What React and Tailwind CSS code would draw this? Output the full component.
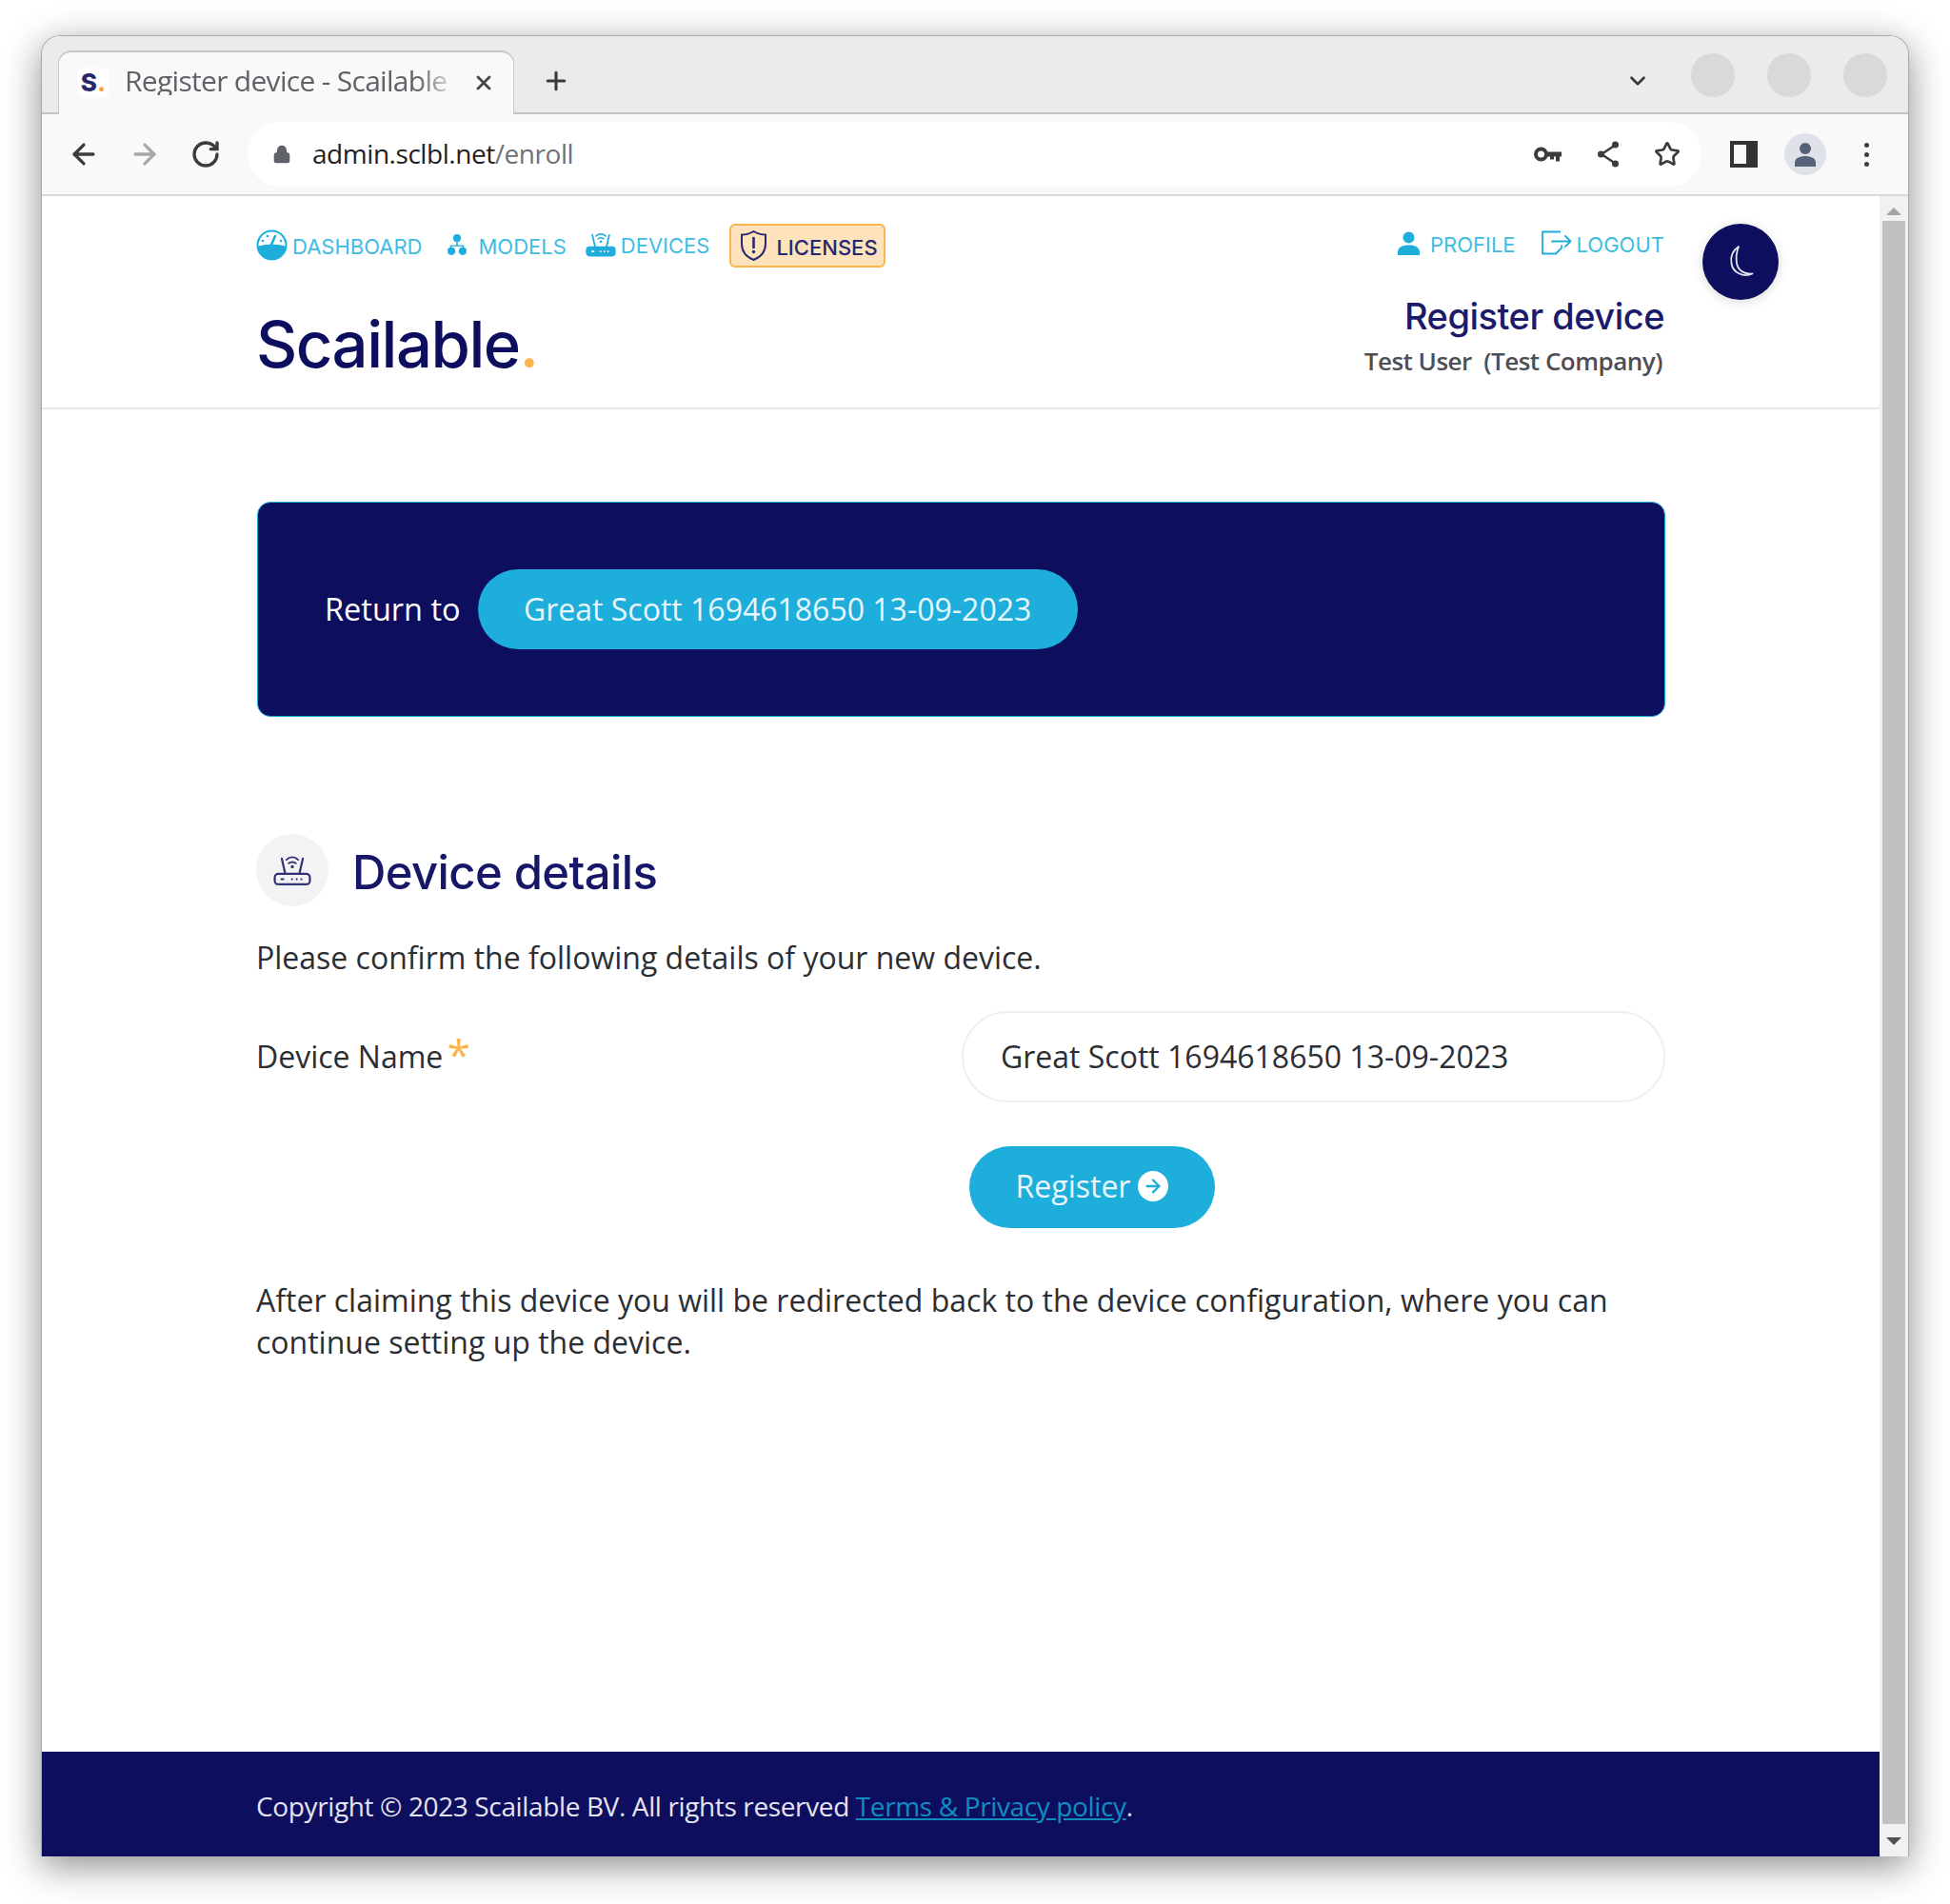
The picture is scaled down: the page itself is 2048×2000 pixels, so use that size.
import { ArrowLeft, ArrowRight, RotateCw, Lock, Plus, X, ChevronDown, Star } from 'lucide-react';

const Gauge = () => (
  <svg width="33" height="33" viewBox="0 0 33 33" fill="none">
    <circle cx="16.5" cy="16.5" r="15" stroke="#1eaedb" strokeWidth="2" />
    <path d="M2 18c5-3 24-3 29 0-1 8-7 14-14.500 14S3 26 2 18z" fill="#1eaedb" />
    <path d="M16 16l4-9" stroke="#1eaedb" strokeWidth="2.500" strokeLinecap="round" />
    <circle cx="7" cy="12" r="1.300" fill="#1eaedb" />
    <circle cx="12" cy="7" r="1.300" fill="#1eaedb" />
    <circle cx="26" cy="12" r="1.300" fill="#1eaedb" />
  </svg>
);

const Hierarchy = () => (
  <svg width="20" height="24" viewBox="0 0 22 25" fill="#1eaedb">
    <circle cx="11" cy="5" r="4.500" />
    <path d="M10.200 9h1.600v4H19v3h-1.600v-1.500H4.600V16H3v-3h7.200z" />
    <circle cx="4.500" cy="20" r="4.500" />
    <circle cx="17.500" cy="20" r="4.500" />
  </svg>
);

const Router = ({ color = '#1eaedb', filled = true, size = 32 }) => (
  <svg width={size} height={size * 0.86} viewBox="0 0 32 28" fill="none">
    <path d="M7 4l3 13M25 4l-3 13" stroke={color} strokeWidth="1.800" strokeLinecap="round" />
    <path d="M11 5c3-3 7-3 10 0M13 8c2-1.500 4-1.500 6 0" stroke={color} strokeWidth="1.600" strokeLinecap="round" />
    <circle cx="16" cy="11" r="1.400" fill={color} />
    <rect x="1" y="17" width="30" height="9" rx="3" fill={filled ? color : 'none'} stroke={color} strokeWidth="1.800" />
    <path d="M6 21.500h3M15 21.500h1.500M19 21.500h1.500M23 21.500h1.500" stroke={filled ? '#fff' : color} strokeWidth="1.600" />
  </svg>
);

const Shield = () => (
  <svg width="29" height="34" viewBox="0 0 29 34" fill="none">
    <path d="M14.500 2c4 2.500 8 3.500 12.500 3.500V15c0 8-5 14-12.500 17C7 29 2 23 2 15V5.500C6.500 5.500 10.500 4.500 14.500 2z" stroke="#28286f" strokeWidth="2" strokeLinejoin="round" />
    <path d="M14.500 9v10" stroke="#28286f" strokeWidth="2.600" strokeLinecap="round" />
    <circle cx="14.500" cy="23.500" r="1.700" fill="#28286f" />
  </svg>
);

const Person = () => (
  <svg width="25" height="25" viewBox="0 0 25 25" fill="#1eaedb">
    <circle cx="12.500" cy="6.500" r="6" />
    <path d="M1 25v-3c0-5 4-7.500 11.500-7.500S24 17 24 22v3z" />
  </svg>
);

const Logout = () => (
  <svg width="33" height="26" viewBox="0 0 33 26" fill="none" stroke="#1eaedb" strokeWidth="1.800">
    <path d="M21 1.500H2v23h14l6-6v-3" strokeLinejoin="round" />
    <path d="M12 11.500h19M26 6l5.500 5.500L26 17" strokeLinecap="round" strokeLinejoin="round" />
  </svg>
);

const Moon = () => (
  <svg width="32" height="36" viewBox="0 0 32 36" fill="none">
    <path d="M14 2C8 6 5 12 6.500 20c1.500 9 12 15 22 10.500-8 1-15-3-16.500-11C11 13 12 7 14 2z" stroke="#e4e5f2" strokeWidth="1.800" strokeLinejoin="round" />
  </svg>
);

const PasswordKey = () => (
  <svg width="29" height="17" viewBox="0 0 29 17" fill="none">
    <circle cx="7.500" cy="8" r="5.500" stroke="#3c3c3c" strokeWidth="4" />
    <path d="M12 5.500h17v5h-2v5h-4v-5h-2v3h-4v-3h-5z" fill="#3c3c3c" />
  </svg>
);

const ShareIcon = () => (
  <svg width="24" height="28" viewBox="0 0 24 28" fill="none">
    <path d="M20 4L5 14l15 10" stroke="#3c3c3c" strokeWidth="2.500" />
    <circle cx="19.500" cy="4" r="3.500" fill="#3c3c3c" />
    <circle cx="4.500" cy="14" r="3.500" fill="#3c3c3c" />
    <circle cx="19.500" cy="24" r="3.500" fill="#3c3c3c" />
  </svg>
);

const Favicon = () => (
  <div className="flex h-[32px] w-[32px] items-center justify-center rounded-md bg-white font-['Inter',sans-serif] text-[26px] leading-none font-extrabold text-[#28286f]">
    S<span className="text-[#f5a93b]">.</span>
  </div>
);

const NavLink = ({ icon, label, className = '' }) => (
  <a className={`flex items-center gap-[5px] text-[#3ebde2] ${className}`}>
    {icon}
    <span className="pt-[3px]">{label}</span>
  </a>
);

const ChromeBar = () => (
  <>
    <div className="flex h-[82px] items-end border-b-2 border-[#c4c4c4] bg-[#ebebeb] pl-[17px]">
      <div className="mb-[-2px] flex h-[67px] w-[479px] items-center rounded-t-[14px] border-t-2 border-x border-[#c8c8c8] border-b-0 bg-[#f9f9f9] pl-[20px] pb-[2px]">
        <Favicon />
        <span className="mb-[4px] ml-[17px] w-[350px] font-['Open_Sans',sans-serif] text-[30px] leading-none tracking-[-0.7px] whitespace-nowrap text-[#5f6368] [mask-image:linear-gradient(to_right,black_88%,transparent_100%)]">
          Register device - Scailable
        </span>
        <X size={24} strokeWidth={2.800} className="ml-[15px] text-[#45474a]" />
      </div>
      <Plus size={30} strokeWidth={2.500} className="mb-[18px] ml-[29px] text-[#3c3c3c]" />
      <ChevronDown size={26} strokeWidth={2.500} className="mb-[20px] ml-auto text-[#3c3c3c]" />
      <div className="mb-[16px] ml-[43px] flex gap-[34px] pr-[22px]">
        <div className="h-[46px] w-[46px] rounded-full bg-[#d9d9d9]" />
        <div className="h-[46px] w-[46px] rounded-full bg-[#d9d9d9]" />
        <div className="h-[46px] w-[46px] rounded-full bg-[#d9d9d9]" />
      </div>
    </div>
    <div className="flex h-[86px] items-center border-b-2 border-[#dadada] bg-[#f9f9f9] pl-[27px]">
      <ArrowLeft size={34} strokeWidth={2.300} className="text-[#3c3c3c]" />
      <ArrowRight size={34} strokeWidth={2.300} className="ml-[30px] text-[#a8a8a8]" />
      <RotateCw size={32} strokeWidth={2.500} className="ml-[31px] text-[#3c3c3c]" />
      <div className="ml-[28px] flex h-[68px] w-[1527px] items-center rounded-full bg-white pl-[26px]">
        <Lock size={20} fill="#5f6368" strokeWidth={2} className="text-[#5f6368]" />
        <span className="mb-[2px] ml-[22px] font-['Open_Sans',sans-serif] text-[28px] leading-none tracking-[-0.45px] text-[#202124]">
          admin.sclbl.net<span className="text-[#6f7276]">/enroll</span>
        </span>
        <div className="ml-auto flex items-center gap-[36px] pr-[22px]">
          <div className="mr-[1px]"><PasswordKey /></div>
          <ShareIcon />
          <Star size={28} strokeWidth={2.300} className="text-[#3c3c3c]" />
        </div>
      </div>
      <div className="ml-[30px] h-[28px] w-[29px] border-[4px] border-r-[12px] border-[#333]" />
      <div className="ml-[28px] flex h-[44px] w-[44px] items-center justify-center rounded-full bg-[#dfe3e9]">
        <svg width="24" height="26" viewBox="0 0 24 26" fill="#56627a">
          <circle cx="12" cy="7" r="6" />
          <path d="M1 26v-4c0-5 5-7 11-7s11 2 11 7v4z" />
        </svg>
      </div>
      <div className="ml-[40px] flex flex-col gap-[5px]">
        <div className="h-[5px] w-[5px] rounded-full bg-[#3c3c3c]" />
        <div className="h-[5px] w-[5px] rounded-full bg-[#3c3c3c]" />
        <div className="h-[5px] w-[5px] rounded-full bg-[#3c3c3c]" />
      </div>
    </div>
  </>
);

export default function App() {
  return (
    <div className="h-[2000px] w-[2048px] bg-white pt-[37px] pl-[43px] font-['Open_Sans',sans-serif]">
      <div className="flex h-[1913px] w-[1962px] flex-col overflow-hidden rounded-t-[20px] border-x border-t border-[#a9a9a9] bg-white shadow-[0_10px_38px_rgba(0,0,0,0.45)]">
        <ChromeBar />
        <div className="flex min-h-0 flex-1">
          <div className="relative flex min-w-0 flex-1 flex-col">
            <header className="h-[224px] border-b-2 border-[#e6e6ec]">
              <div className="ml-[225px] w-[1479px]">
                <div className="flex items-start justify-between pt-[27px] text-[22px] leading-none font-['Inter',sans-serif]">
                  <nav className="flex items-center">
                    <NavLink icon={<Gauge />} label="DASHBOARD" />
                    <NavLink icon={<Hierarchy />} label="MODELS" className="ml-[27px] gap-[12px]" />
                    <NavLink icon={<Router />} label="DEVICES" className="ml-[20px]" />
                    <a className="mt-[2px] ml-[21px] flex h-[46px] w-[164px] items-center gap-[9px] rounded-[6px] border-2 border-[#f9b54c] bg-[#fde2bb] pl-[9px] font-medium text-[#28286f]">
                      <Shield />
                      <span className="pt-[3px]">LICENSES</span>
                    </a>
                  </nav>
                  <nav className="flex items-center pt-[9px]">
                    <NavLink icon={<Person />} label="PROFILE" className="gap-[10px]" />
                    <NavLink icon={<Logout />} label="LOGOUT" className="ml-[26px]" />
                  </nav>
                </div>
                <div className="flex items-start justify-between">
                  <div className="mt-[41px] font-['Inter',sans-serif] text-[67px] leading-[80px] font-medium tracking-[-1.5px] text-[#0e0e5f]">
                    Scailable<span className="text-[#f9b54c]">.</span>
                  </div>
                  <div className="mt-[26px] text-right">
                    <div className="font-['Inter',sans-serif] text-[38px] leading-[50px] font-medium tracking-[-0.5px] text-[#1b1b6b]">Register device</div>
                    <div className="mt-[2px] pr-[2px] text-[26px] leading-[40px] font-semibold tracking-[-0.5px] text-[#4c4f55]">Test User&nbsp; (Test Company)</div>
                  </div>
                </div>
              </div>
            </header>
            <button className="absolute top-[29px] left-[1744px] flex h-[80px] w-[80px] items-center justify-center rounded-full bg-[#0e0e5f] shadow-[0_2px_12px_rgba(0,0,0,0.15)]">
              <Moon />
            </button>

            <main className="ml-[225px] w-[1480px] flex-1">
              <section className="mt-[97px] ml-[1px] flex h-[226px] items-center rounded-[14px] border border-[#1eaedb] bg-[#0e0e5f] pl-[70px]">
                <span className="text-[32.5px] text-white">Return to</span>
                <a className="ml-[18px] flex h-[84px] w-[630px] items-center justify-center rounded-full bg-[#1eaedb] text-[32px] text-[#e8f7fc]">
                  Great Scott 1694618650 13-09-2023
                </a>
              </section>

              <div className="mt-[123px] flex items-center">
                <div className="flex h-[76px] w-[76px] items-center justify-center rounded-full bg-[#f3f3f4]">
                  <Router color="#32327a" filled={false} size={40} />
                </div>
                <h2 className="ml-[25px] pt-[4px] font-['Inter',sans-serif] text-[49px] leading-none font-medium tracking-[-0.6px] text-[#17176a]">Device details</h2>
              </div>
              <p className="mt-[32px] w-[1479px] text-[32px] leading-[44px] text-[#2b2e33]">Please confirm the following details of your new device.</p>

              <div className="mt-[34px] flex items-center">
                <label className="w-[741px] text-[32px] leading-[44px] text-[#2b2e33]">
                  Device Name <span className="ml-[-4px] align-[-2px] text-[44px] leading-[0] text-[#f9b54c]">*</span>
                </label>
                <div className="flex h-[96px] flex-1 items-center rounded-full border-2 border-[#efefef] pl-[39px] text-[32px] text-[#2b2e33]">
                  Great Scott 1694618650 13-09-2023
                </div>
              </div>

              <div className="mt-[46px] pl-[749px]">
                <button className="flex h-[86px] w-[258px] items-center justify-center gap-[8px] rounded-full bg-[#1eaedb] pb-[2px] text-[32px] text-[#e8f7fc]">
                  Register
                  <span className="flex h-[32px] w-[32px] items-center justify-center rounded-full bg-white">
                    <ArrowRight size={22} strokeWidth={2.500} className="text-[#1eaedb]" />
                  </span>
                </button>
              </div>

              <p className="mt-[54px] w-[1479px] text-[32px] leading-[44px] text-[#2b2e33]">
                After claiming this device you will be redirected back to the device configuration, where you can continue setting up the device.
              </p>
            </main>

            <footer className="flex h-[110px] items-center bg-[#0e0e5f] pl-[225px] pt-[4px] text-[28px] tracking-[-0.37px] text-[#e4e4f0]">
              <span>
                Copyright © 2023 Scailable BV. All rights reserved{' '}
                <a className="text-[#0e8ec0] underline">Terms &amp; Privacy policy</a>.
              </span>
            </footer>
          </div>

          <div className="flex w-[30px] flex-col items-center border-l border-[#eee] bg-[#f1f1f1] pr-[2px]">
            <div className="mt-[12px] h-0 w-0 border-x-[8px] border-b-[8px] border-x-transparent border-b-[#a3a3a3]" />
            <div className="mt-[6px] w-[24px] flex-1 bg-[#c1c1c1]" />
            <div className="mt-[14px] mb-[12px] h-0 w-0 border-x-[8px] border-t-[8px] border-x-transparent border-t-[#505050]" />
          </div>
        </div>
      </div>
    </div>
  );
}
